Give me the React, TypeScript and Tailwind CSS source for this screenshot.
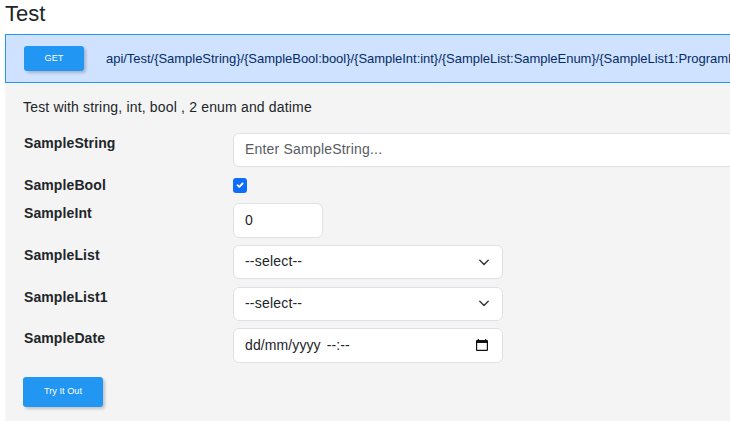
import type { ReactNode } from 'react';

function Row({ label, className, children }: { label: string; className: string; children: ReactNode }) {
  return (
    <div className={`flex items-start ${className}`}>
      <label className="w-[210px] shrink-0 pl-px text-[14px] leading-[21px] font-bold tracking-[0.1px]">{label}</label>
      {children}
    </div>
  );
}

function Chevron() {
  return (
    <svg viewBox="0 0 12 12" className="h-3 w-3" fill="none" stroke="#343a40" strokeWidth="1.5" strokeLinecap="round" strokeLinejoin="round">
      <path d="m1.8 4.3 4.2 4.2 4.2-4.2" />
    </svg>
  );
}

function Select({ textClass }: { textClass: string }) {
  return (
    <div className={`flex h-[34px] w-[270px] items-center justify-between rounded-[6px] border border-[#dee2e6] bg-white pr-3 pl-[11px] text-[14px] tracking-[0.2px] ${textClass}`}>
      <span>--select--</span>
      <Chevron />
    </div>
  );
}

export default function App() {
  return (
    <main className="flex h-[421px] w-[730px] flex-col overflow-hidden bg-white pl-[5px] font-['Liberation_Sans',Arial,sans-serif] text-[#212529]">
      <h1 className="h-[34px] shrink-0 text-[22px] leading-[27px]">Test</h1>
      <div className="flex h-[49px] w-[900px] shrink-0 items-center border border-[#2196f3] bg-[#cfe2ff] pl-[18px]">
        <button className="h-[25px] w-[60px] shrink-0 rounded-[3px] bg-[#2196f3] text-[9.2px] leading-[25px] text-white shadow-[2px_2px_3px_rgba(0,0,0,0.2)]">GET</button>
        <span className="ml-[22px] pt-px text-[13px] tracking-[-0.03px] whitespace-nowrap text-[#052c65]">
          {'api/Test/{SampleString}/{SampleBool:bool}/{SampleInt:int}/{SampleList:SampleEnum}/{SampleList1:ProgramEnum}'}
        </span>
      </div>
      <section className="flex w-[900px] grow flex-col bg-[#f4f4f4] pl-[18px]">
        <p className="h-[50px] shrink-0 pt-[14px] text-[14px] leading-[21px] tracking-[0.17px]">Test with string, int, bool , 2 enum and datime</p>
        <Row label="SampleString" className="h-[42px]">
          <div className="h-[34px] w-[600px] rounded-[6px] border border-[#dee2e6] bg-white pl-[11px] text-[14px] leading-[30px] tracking-[0.2px] text-[#595c5f]">Enter SampleString...</div>
        </Row>
        <Row label="SampleBool" className="h-[28px]">
          <span className="mt-[3px] flex h-[15px] w-[14px] items-center justify-center rounded-[3px] bg-[#0d6efd]">
            <svg viewBox="0 0 14 15" className="h-[15px] w-[14px]" fill="none" stroke="white" strokeWidth="1.8" strokeLinecap="round" strokeLinejoin="round">
              <path d="m4.5 7.2 1.8 1.7 3.3-3.4" />
            </svg>
          </span>
        </Row>
        <Row label="SampleInt" className="h-[42px]">
          <div className="h-[35px] w-[90px] rounded-[6px] border border-[#dee2e6] bg-white pl-[11px] text-[14px] leading-[33px]">0</div>
        </Row>
        <Row label="SampleList" className="h-[42px]"><Select textClass="pb-px" /></Row>
        <Row label="SampleList1" className="h-[41px]"><Select textClass="pb-[2px]" /></Row>
        <Row label="SampleDate" className="h-[49px]">
          <div className="flex h-[35px] w-[270px] items-center justify-between rounded-[6px] border border-[#dee2e6] bg-white pr-[13px] pl-[11px] text-[14px]">
            <span className="tracking-[0.1px]">dd/mm/yyyy<span className="ml-[6px]">--:--</span></span>
            <svg viewBox="0 0 14 14" className="mb-[2px] h-[14px] w-[14px]">
              <path fill="#111" fillRule="evenodd" d="M2.7 1h1.2v1h6.2V1h1.2v1h.7a1 1 0 0 1 1 1v9a1 1 0 0 1-1 1H2a1 1 0 0 1-1-1V3a1 1 0 0 1 1-1h.7zM2.2 5v6.8h9.6V5z" />
            </svg>
          </div>
        </Row>
        <button className="h-[30px] w-[80px] rounded-[3px] bg-[#2196f3] pb-[2px] text-[9.2px] leading-[26px] text-white shadow-[2px_2px_3px_rgba(0,0,0,0.2)]">Try It Out</button>
      </section>
    </main>
  );
}
